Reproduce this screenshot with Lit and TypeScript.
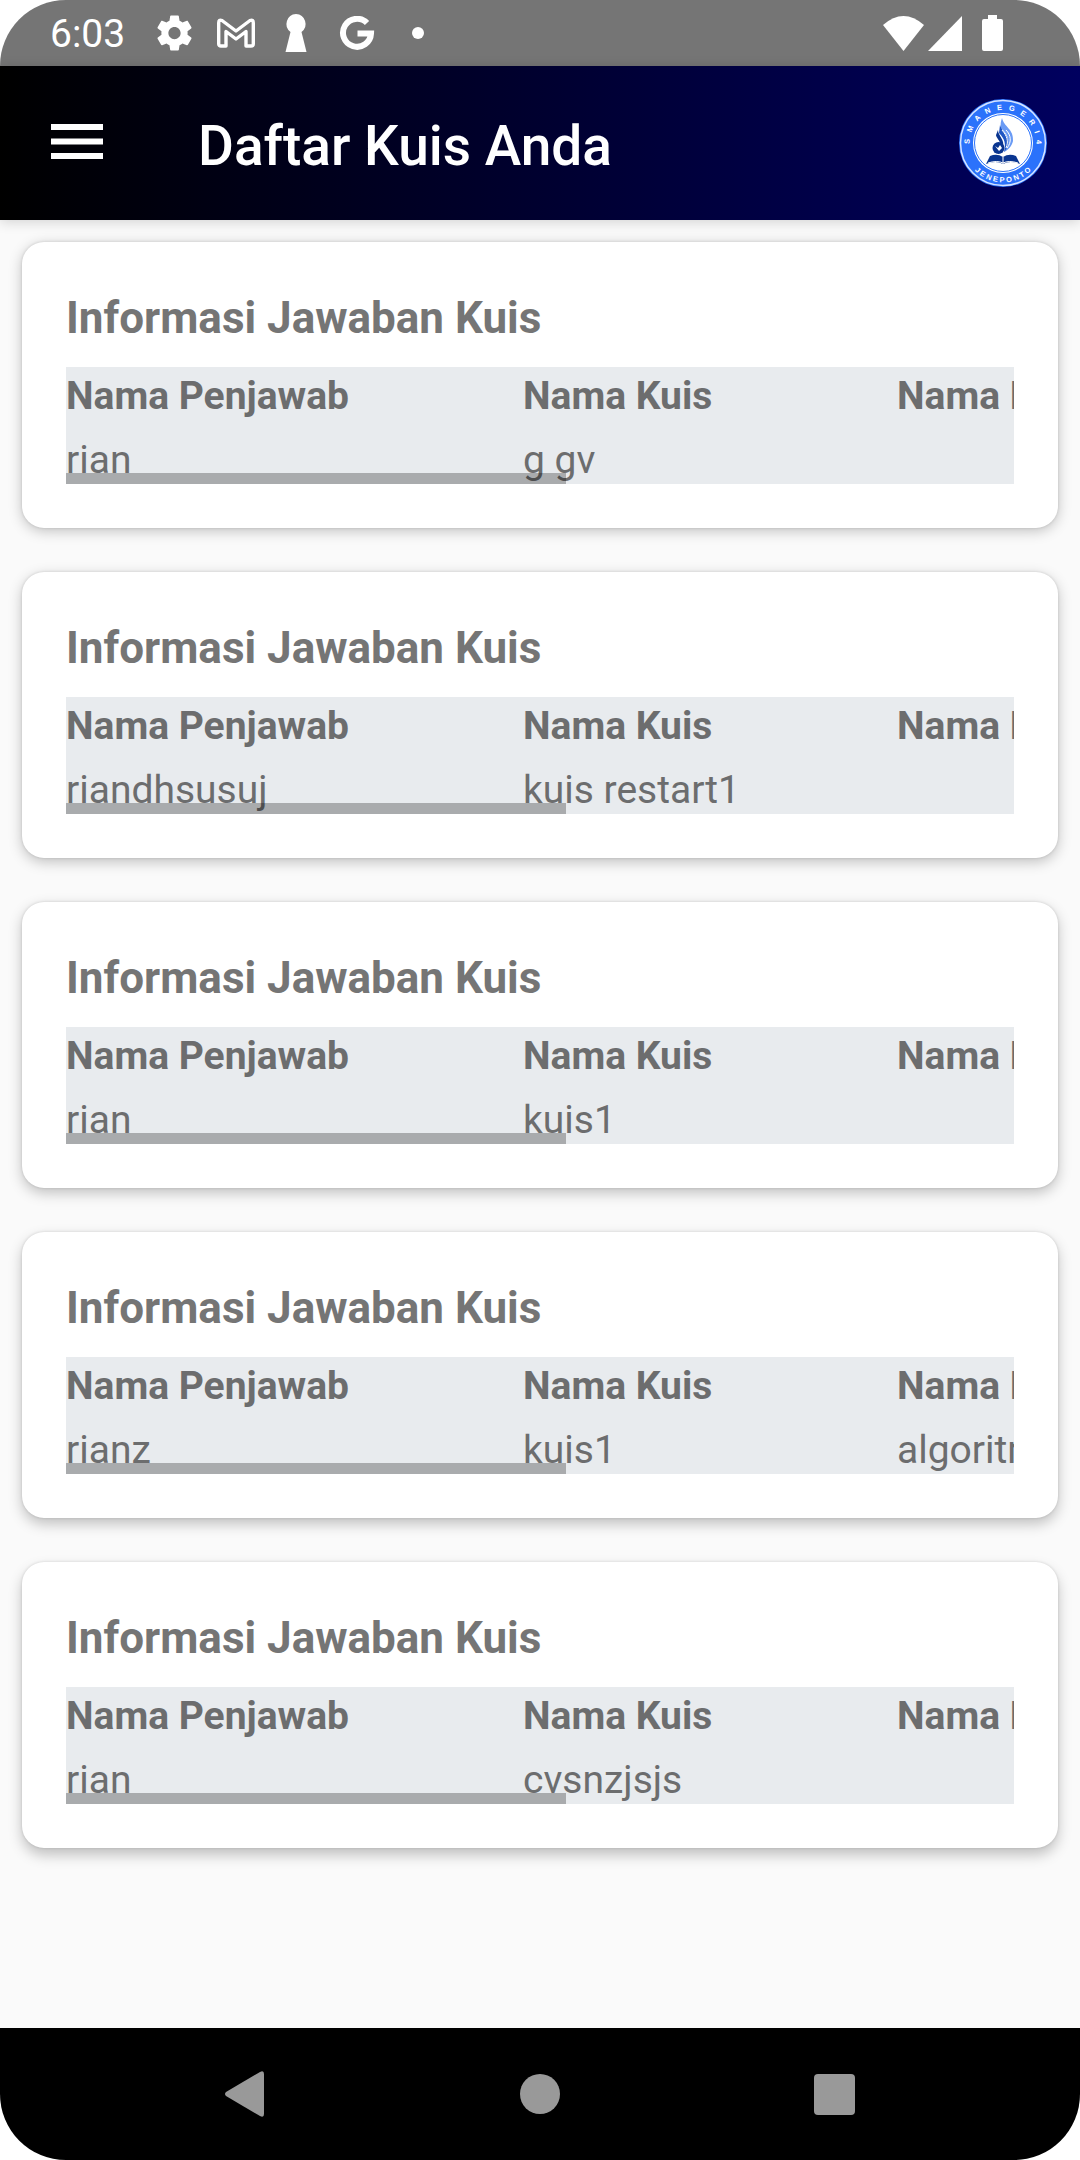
import { LitElement, html, css, svg } from "lit";
import { customElement, property } from "lit/decorators.js";

interface Answer {
  name: string;
  quiz: string;
  topic: string;
}

const ANSWERS: Answer[] = [
  { name: "rian", quiz: "g gv", topic: "" },
  { name: "riandhsusuj", quiz: "kuis restart1", topic: "" },
  { name: "rian", quiz: "kuis1", topic: "" },
  { name: "rianz", quiz: "kuis1", topic: "algoritma" },
  { name: "rian", quiz: "cvsnzjsjs", topic: "" },
];

@customElement("status-bar")
export class StatusBar extends LitElement {
  static styles = css`
    :host {
      display: flex;
      align-items: center;
      justify-content: space-between;
      height: 66px;
      padding: 0 77px 0 50px;
      background: #757575;
      color: #fff;
    }
    .group {
      display: flex;
      align-items: center;
    }
    .clock {
      font-size: 39px;
      line-height: 46px;
      margin-right: 32px;
      padding-top: 2px;
    }
    .notices {
      gap: 25px;
    }
    .signals {
      gap: 4px;
    }
    .battery {
      margin-left: 16px;
    }
    svg {
      display: block;
      fill: currentColor;
    }
  `;

  render() {
    return html`
      <div class="group">
        <span class="clock">6:03</span>
        <div class="group notices">
          <svg width="35" height="36" viewBox="2 2 20 20" aria-hidden="true">
            <path
              d="M19.43 12.98c.04-.32.07-.64.07-.98s-.03-.66-.07-.98l2.11-1.65c.19-.15.24-.42.12-.64l-2-3.46c-.12-.22-.39-.3-.61-.22l-2.49 1c-.52-.4-1.08-.73-1.69-.98l-.38-2.65C14.46 2.18 14.25 2 14 2h-4c-.25 0-.46.18-.49.42l-.38 2.65c-.61.25-1.17.59-1.69.98l-2.49-1c-.23-.09-.49 0-.61.22l-2 3.46c-.13.22-.07.49.12.64l2.11 1.65c-.04.32-.07.65-.07.98s.03.66.07.98l-2.11 1.65c-.19.15-.24.42-.12.64l2 3.46c.12.22.39.3.61.22l2.49-1c.52.4 1.08.73 1.69.98l.38 2.65c.03.24.24.42.49.42h4c.25 0 .46-.18.49-.42l.38-2.65c.61-.25 1.17-.59 1.69-.98l2.49 1c.23.09.49 0 .61-.22l2-3.46c.12-.22.07-.49-.12-.64l-2.11-1.65zM12 15.5c-1.93 0-3.5-1.57-3.5-3.5s1.57-3.5 3.5-3.5 3.5 1.57 3.5 3.5-1.57 3.5-3.5 3.5z"
            />
          </svg>
          <svg width="38" height="30" viewBox="0 0 38 30" aria-hidden="true">
            <path
              d="M5 2.500 19 13 33 2.500Q36.300 1 36.300 5V26Q36.300 28 34 28H29V13.500L19 21 9 13.500V28H4Q1.700 28 1.700 26V5Q1.700 1 5 2.500Z"
              fill="none"
              stroke="currentColor"
              stroke-width="3.400"
              stroke-linejoin="round"
            />
          </svg>
          <svg width="34" height="38" viewBox="1 0 34 38" aria-hidden="true">
            <path d="M17 0a10 10 0 0 1 5.500 18L27.500 38H6.500L11.500 18A10 10 0 0 1 17 0Z" />
          </svg>
          <svg width="36" height="35" viewBox="-1 0 36 35" aria-hidden="true">
            <path
              d="M27 7A14 14 0 1 0 31 17.500H17.500"
              fill="none"
              stroke="currentColor"
              stroke-width="6"
            />
          </svg>
          <svg width="38" height="12" viewBox="1 0 38 12" aria-hidden="true">
            <circle cx="19" cy="6" r="6" />
          </svg>
        </div>
      </div>
      <div class="group signals">
        <svg width="41" height="35" viewBox="0 0 41 35" aria-hidden="true">
          <path d="M0 9Q20.500-9 41 9L20.500 35Z" />
        </svg>
        <svg width="34" height="35" viewBox="0 0 34 35" aria-hidden="true">
          <path d="M34 0V35H0Z" />
        </svg>
        <svg class="battery" width="21" height="36" viewBox="0 0 21 36" aria-hidden="true">
          <path
            d="M6 0H15V4H19Q21 4 21 6V34Q21 36 19 36H2Q0 36 0 34V6Q0 4 2 4H6Z"
          />
        </svg>
      </div>
    `;
  }
}

// Letters round the seal are set apart by hard spaces, as the ring is widely spaced.
const ring = (letters: string, spaces: number) =>
  letters.split("").join("\u00a0".repeat(spaces));

const schoolSeal = svg`
  <circle cx="44" cy="44" r="44" fill="#2b72fb" />
  <circle cx="44" cy="44" r="42.500" fill="none" stroke="#d6e4ff" stroke-width="1.500" />
  <circle cx="44" cy="44" r="30" fill="#fff" />
  <circle cx="44" cy="44" r="28.500" fill="none" stroke="#2b72fb" stroke-width="1" />
  <path id="upper" d="M11.800 52.600A33.300 33.300 0 1 1 76.200 52.600" fill="none" />
  <path id="lower" d="M6.900 57.500A39.500 39.500 0 0 0 81.100 57.500" fill="none" />
  <g font-family="Liberation Sans, sans-serif" font-weight="700" font-size="7.500" fill="#fff" text-anchor="middle">
    <text><textPath href="#upper" startOffset="50%">${ring("SMANEGERI4", 3)}</textPath></text>
    <text><textPath href="#lower" startOffset="50%">${ring("JENEPONTO", 1)}</textPath></text>
  </g>
  <path d="M43 19C45 28 55 30 54 42C53 47 49 51 45 53C52 44 50 36 42 29C41 25 42 22 43 19Z" fill="#6a9bf5" />
  <path d="M41 26C43 33 51 37 49 46C48 49 47 51 45 53C47 45 46 40 40 34Z" fill="#1f56c4" />
  <path d="M39 31C39 37 46 40 44 49L41 45C41 41 37 39 37 36Z" fill="#0a3590" />
  <path d="M47 31C52 36 53 43 48 49M43 31C48 37 50 42 47 49" stroke="#fff" stroke-width="1" fill="none" />
  <circle cx="39.500" cy="49" r="6" fill="#0a3590" />
  <path d="M36 47 39 49 41 46 43 49 40 52Z" fill="#fff" />
  <path d="M31 57Q38 54 44 58Q50 54 57 57L61 65Q51 61 44 65Q37 61 27 65Z" fill="#0a3590" />
  <path d="M44 58V65M29 64Q38 61 44 64Q50 61 59 64" stroke="#fff" stroke-width="1" fill="none" />
`;

@customElement("app-header")
export class AppHeader extends LitElement {
  static styles = css`
    :host {
      display: flex;
      align-items: center;
      height: 154px;
      padding: 0 33px 0 51px;
      box-sizing: border-box;
      background: linear-gradient(90deg, #000, #00005f);
      box-shadow: 0 2px 12px rgba(0, 0, 0, 0.16);
      color: #fff;
    }
    button {
      padding: 0 0 4px;
      border: 0;
      background: none;
      color: inherit;
      cursor: pointer;
    }
    svg {
      display: block;
      fill: currentColor;
    }
    h1 {
      flex: 1;
      margin: 0 0 0 95px;
      padding-top: 6px;
      font-size: 55px;
      line-height: 64px;
      font-weight: 500;
    }
  `;

  render() {
    return html`
      <button aria-label="Menu">
        <svg width="52" height="35" viewBox="0 0 52 35" aria-hidden="true">
          <path d="M0 0H52V6H0ZM0 14.500H52V20.500H0ZM0 29H52V35H0Z" />
        </svg>
      </button>
      <h1>Daftar Kuis Anda</h1>
      <svg width="88" height="88" viewBox="0 0 88 88" role="img">${schoolSeal}</svg>
    `;
  }
}

@customElement("answer-card")
export class AnswerCard extends LitElement {
  @property({ attribute: false }) answer!: Answer;

  static styles = css`
    :host {
      display: block;
      padding: 44px;
      border-radius: 22px;
      background: #fff;
      color: #757575;
      box-shadow: 0 var(--drop, 4px) 14px rgba(0, 0, 0, 0.23),
        0 0 3px rgba(0, 0, 0, 0.14);
    }
    h2 {
      margin: 0 0 17px;
      font-size: 44px;
      line-height: 64px;
      font-weight: 700;
    }
    .frame {
      position: relative;
      background: #e8ebee;
      color: #6c6d6e;
    }
    .scroller {
      overflow-x: auto;
      overflow-y: hidden;
      scrollbar-width: none;
    }
    .thumb {
      position: absolute;
      left: 0;
      bottom: 0;
      width: 500px;
      max-width: 53%;
      height: 11px;
      background: rgba(0, 0, 0, 0.27);
    }
    table {
      width: 1797px;
      table-layout: fixed;
      border-collapse: collapse;
      font-size: 39px;
      line-height: 48px;
      text-align: left;
      white-space: nowrap;
    }
    .name {
      width: 457px;
    }
    .quiz {
      width: 374px;
    }
    th {
      padding: 5px 0 0;
      font-weight: 700;
    }
    td {
      height: 48px;
      padding: 16px 0 0;
    }
  `;

  render() {
    const { name, quiz, topic } = this.answer;
    return html`
      <h2>Informasi Jawaban Kuis</h2>
      <div class="frame">
        <div class="scroller">
          <table>
            <thead>
              <tr>
                <th class="name">Nama Penjawab</th>
                <th class="quiz">Nama Kuis</th>
                <th>Nama Materi</th>
              </tr>
            </thead>
            <tbody>
              <tr>
                <td>${name}</td>
                <td>${quiz}</td>
                <td>${topic}</td>
              </tr>
            </tbody>
          </table>
        </div>
        <div class="thumb"></div>
      </div>
    `;
  }
}

@customElement("navigation-bar")
export class NavigationBar extends LitElement {
  static styles = css`
    :host {
      display: flex;
      align-items: center;
      justify-content: space-around;
      height: 132px;
      padding: 0 98px;
      background: #000;
      color: #999;
    }
    button {
      display: flex;
      justify-content: center;
      width: 132px;
      padding: 0;
      border: 0;
      background: none;
      color: inherit;
      cursor: pointer;
    }
    svg {
      fill: currentColor;
    }
  `;

  render() {
    return html`
      <button aria-label="Kembali">
        <svg width="42" height="46" viewBox="0 0 42 46" aria-hidden="true">
          <path d="M2 21 36 1Q40-1 40 3V43Q40 47 36 45L2 25Q0 23 2 21Z" />
        </svg>
      </button>
      <button aria-label="Beranda">
        <svg width="40" height="40" viewBox="0 0 40 40" aria-hidden="true">
          <circle cx="20" cy="20" r="20" />
        </svg>
      </button>
      <button aria-label="Terbaru">
        <svg width="41" height="41" viewBox="0 0 41 41" aria-hidden="true">
          <rect width="41" height="41" rx="4" />
        </svg>
      </button>
    `;
  }
}

@customElement("app-root")
export class AppRoot extends LitElement {
  static styles = css`
    :host {
      display: block;
      background: #fff;
      font-family: Roboto, "Noto Sans", sans-serif;
    }
    .screen {
      display: flex;
      flex-direction: column;
      min-height: 100vh;
      border-radius: 66px;
      overflow: hidden;
      background: #fafafa;
    }
    main {
      flex: 1;
      display: flex;
      flex-direction: column;
      gap: 44px;
      padding: 22px;
    }
  `;

  render() {
    return html`
      <div class="screen">
        <status-bar></status-bar>
        <app-header></app-header>
        <main>
          ${ANSWERS.map(
            (answer, i) => html`
              <answer-card .answer=${answer} style="--drop:${3 + i}px"></answer-card>
            `
          )}
        </main>
        <navigation-bar></navigation-bar>
      </div>
    `;
  }
}
